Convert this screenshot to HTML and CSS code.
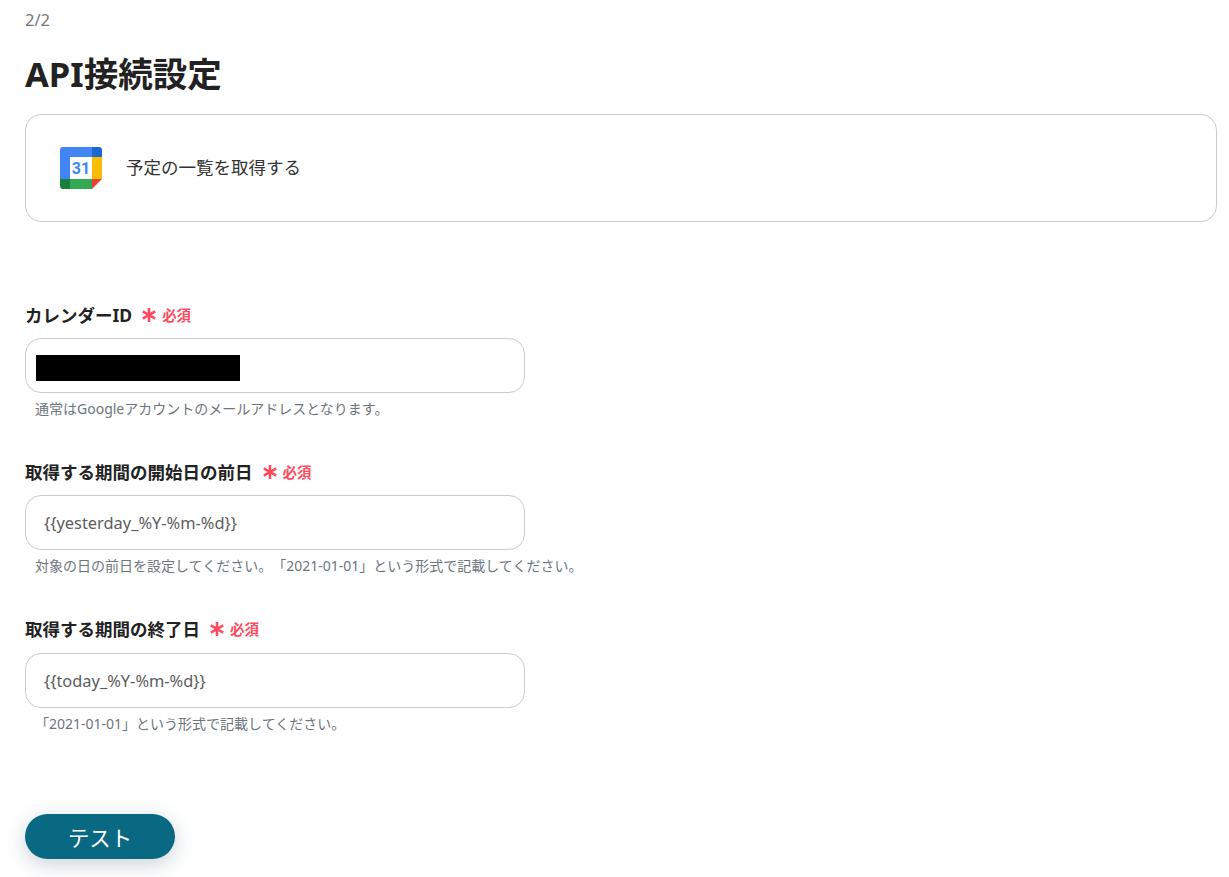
FILE: index.html
```html
<!DOCTYPE html>
<html lang="ja">
<head>
<meta charset="utf-8">
<title>API接続設定</title>
<link rel="stylesheet" href="styles.css">
</head>
<body>
<main class="page">
  <div class="step">2/2</div>
  <h1 class="title">API接続設定</h1>
  <section class="action-card">
    <svg class="cal-icon" viewBox="0 0 42 42" aria-hidden="true">
      <path fill="#4285f4" d="M3 0H32V10H10V32H0V3A3 3 0 0 1 3 0Z"/>
      <path fill="#1967d2" d="M32 0H39A3 3 0 0 1 42 3V10H32Z"/>
      <rect fill="#fff" x="10" y="10" width="22" height="22"/>
      <rect fill="#fbbc04" x="32" y="10" width="10" height="22"/>
      <rect fill="#34a853" x="10" y="32" width="22" height="10"/>
      <path fill="#188038" d="M0 32H10V42H3A3 3 0 0 1 0 39Z"/>
      <path fill="#ea4335" d="M32 32H42L32 42Z"/>
      <text class="cal-num" x="21" y="27" text-anchor="middle">31</text>
    </svg>
    <span class="action-name">予定の一覧を取得する</span>
  </section>

  <form class="fields">
    <div class="field">
      <div class="label-row"><label class="label">カレンダーID</label><svg class="mark" viewBox="0 0 14 14" aria-hidden="true"><path d="M7 0V14M.8 3.4L13.2 10.6M13.2 3.4L.8 10.6"/></svg><span class="req">必須</span></div>
      <div class="input"><span class="redact"></span></div>
      <p class="help">通常はGoogleアカウントのメールアドレスとなります。</p>
    </div>
    <div class="field">
      <div class="label-row"><label class="label">取得する期間の開始日の前日</label><svg class="mark" viewBox="0 0 14 14" aria-hidden="true"><path d="M7 0V14M.8 3.4L13.2 10.6M13.2 3.4L.8 10.6"/></svg><span class="req">必須</span></div>
      <div class="input">{{yesterday_%Y-%m-%d}}</div>
      <p class="help">対象の日の前日を設定してください。「2021-01-01」という形式で記載してください。</p>
    </div>
    <div class="field">
      <div class="label-row"><label class="label">取得する期間の終了日</label><svg class="mark" viewBox="0 0 14 14" aria-hidden="true"><path d="M7 0V14M.8 3.4L13.2 10.6M13.2 3.4L.8 10.6"/></svg><span class="req">必須</span></div>
      <div class="input">{{today_%Y-%m-%d}}</div>
      <p class="help">「2021-01-01」という形式で記載してください。</p>
    </div>
  </form>

  <button class="test-btn" type="button">テスト</button>
</main>
</body>
</html>
```
FILE: styles.css
```css
* { box-sizing: border-box; }
html, body { margin: 0; padding: 0; background: #fff; }
body {
  font-family: "Noto Sans", "Noto Sans CJK JP", sans-serif;
  color: #222;
  height: 877px;
  overflow: hidden;
  text-spacing-trim: space-all;
}
.page { padding: 9px 12px 0 25px; }
.step { font-size: 16.5px; line-height: 22px; color: #777; }
.title {
  margin: 21px 0 0;
  font-size: 34.5px;
  line-height: 44px;
  font-weight: 700;
  color: #222;
}
.action-card {
  margin-top: 18px;
  height: 108px;
  border: 1px solid #ccc;
  border-radius: 16px;
  display: flex;
  align-items: center;
  padding-left: 34px;
  gap: 24px;
}
.cal-icon { width: 42px; height: 42px; flex: none; }
.cal-num {
  font-family: Roboto, sans-serif;
  font-size: 16px;
  font-weight: 700;
  fill: #4285f4;
}
.action-name { font-size: 17.5px; line-height: 22px; color: #333; position: relative; top: -1px; }
.fields { margin-top: 82px; display: flex; flex-direction: column; }
.field { height: 157.2px; }
.label-row { display: flex; align-items: center; height: 22.2px; }
.label { font-size: 17.5px; font-weight: 700; line-height: 22px; color: #222; }
.mark {
  margin-left: 10px;
  width: 14px;
  height: 14px;
  flex: none;
  fill: none;
  stroke: #ff4b5f;
  stroke-width: 2.6;
}
.req { margin-left: 6px; font-size: 14.5px; font-weight: 700; color: #ff4b5f; line-height: 22px; }
.input {
  margin-top: 12px;
  width: 500px;
  height: 55px;
  border: 1px solid #ccc;
  border-radius: 16px;
  display: flex;
  align-items: center;
  padding-left: 18px;
  font-size: 16.4px;
  color: #5c5c5c;
}
.redact { display: block; width: 204px; height: 26px; background: #000; margin: 4px 0 0 -8px; }
.help { margin: 7px 0 0 10px; font-size: 14px; line-height: 18px; color: #6c757d; }
.test-btn {
  display: block;
  margin-top: 38.5px;
  width: 150px;
  height: 45px;
  border: none;
  border-radius: 23px;
  background: #0a6982;
  color: #fff;
  font-family: inherit;
  font-size: 21.4px;
  box-shadow: 0 5px 20px rgba(40, 70, 90, 0.25);
}
```
